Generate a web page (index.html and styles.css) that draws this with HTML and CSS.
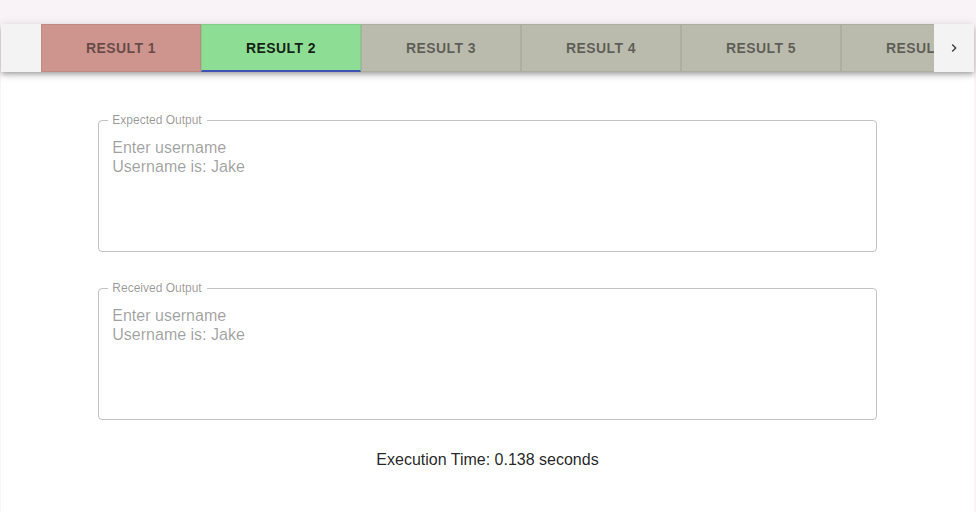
FILE: index.html
```html
<!DOCTYPE html>
<html>
<head>
<meta charset="utf-8">
<link rel="stylesheet" href="styles.css">
</head>
<body>
<div class="page">
  <div class="appbar">
    <div class="scroll-btn"></div>
    <div class="tabs-viewport">
      <div class="tabs">
        <div class="tab tab-fail">Result 1</div>
        <div class="tab tab-pass tab-selected">Result 2</div>
        <div class="tab tab-none">Result 3</div>
        <div class="tab tab-none">Result 4</div>
        <div class="tab tab-none">Result 5</div>
        <div class="tab tab-none">Result 6</div>
      </div>
    </div>
    <div class="scroll-btn">
      <svg class="chevron" viewBox="0 0 24 24" width="16" height="16"><path d="M8.59 16.59L13.17 12 8.59 7.41 10 6l6 6-6 6-1.41-1.41z"/></svg>
    </div>
  </div>
  <div class="content">
    <fieldset class="field">
      <legend class="field-label">Expected Output</legend>
      <div class="field-text">Enter username
Username is: Jake</div>
    </fieldset>
    <fieldset class="field">
      <legend class="field-label">Received Output</legend>
      <div class="field-text">Enter username
Username is: Jake</div>
    </fieldset>
    <p class="exec-time">Execution Time: 0.138 seconds</p>
  </div>
</div>
</body>
</html>
```
FILE: styles.css
```css
html, body {
  margin: 0;
  padding: 0;
}
body {
  background: #f9f2f6;
  font-family: "Liberation Sans", Arial, Helvetica, sans-serif;
  overflow: hidden;
}
.page {
  margin: 24px 2px 0 1px;
  background: #ffffff;
  min-height: 600px;
}
.appbar {
  display: flex;
  height: 48px;
  background: #f3f3f3;
  box-shadow: 0px 2px 4px -1px rgba(0,0,0,0.2), 0px 4px 5px 0px rgba(0,0,0,0.14), 0px 1px 10px 0px rgba(0,0,0,0.12);
  position: relative;
  z-index: 1;
}
.scroll-btn {
  flex: 0 0 40px;
  display: flex;
  align-items: center;
  justify-content: center;
}
.chevron {
  fill: #3a3a3a;
}
.tabs-viewport {
  flex: 1 1 auto;
  overflow: hidden;
}
.tabs {
  display: flex;
  height: 48px;
}
.tab {
  flex: 0 0 160px;
  box-sizing: border-box;
  height: 48px;
  display: flex;
  align-items: center;
  justify-content: center;
  font-size: 14px;
  font-weight: bold;
  letter-spacing: 0.4px;
  text-transform: uppercase;
  color: rgba(0,0,0,0.5);
  border: 1px solid rgba(0,0,0,0.07);
  white-space: nowrap;
}
.tab-fail {
  background: #cd958e;
}
.tab-pass {
  background: #8edd95;
}
.tab-none {
  background: #bbbbad;
}
.tab-selected {
  color: rgba(0,0,0,0.87);
  border-bottom: 2px solid #3f51b5;
}
.content {
  display: flex;
  flex-direction: column;
  align-items: center;
  padding-top: 42px;
}
.field {
  width: 80%;
  box-sizing: border-box;
  margin: 0 0 30px 0;
  padding: 12px 14px 18px 13px;
  border: 1px solid #c2c2c2;
  border-radius: 4px;
  min-width: 0;
}
.field-label {
  margin-left: -4px;
  padding: 0 5px 0 4px;
  font-size: 12px;
  line-height: 12px;
  color: rgba(0,0,0,0.42);
}
.field-text {
  height: 95px;
  font-size: 16px;
  line-height: 19px;
  color: rgba(0,0,0,0.38);
  white-space: pre-line;
}
.exec-time {
  margin: 0;
  font-size: 16px;
  line-height: 19px;
  color: rgba(0,0,0,0.87);
}
```
